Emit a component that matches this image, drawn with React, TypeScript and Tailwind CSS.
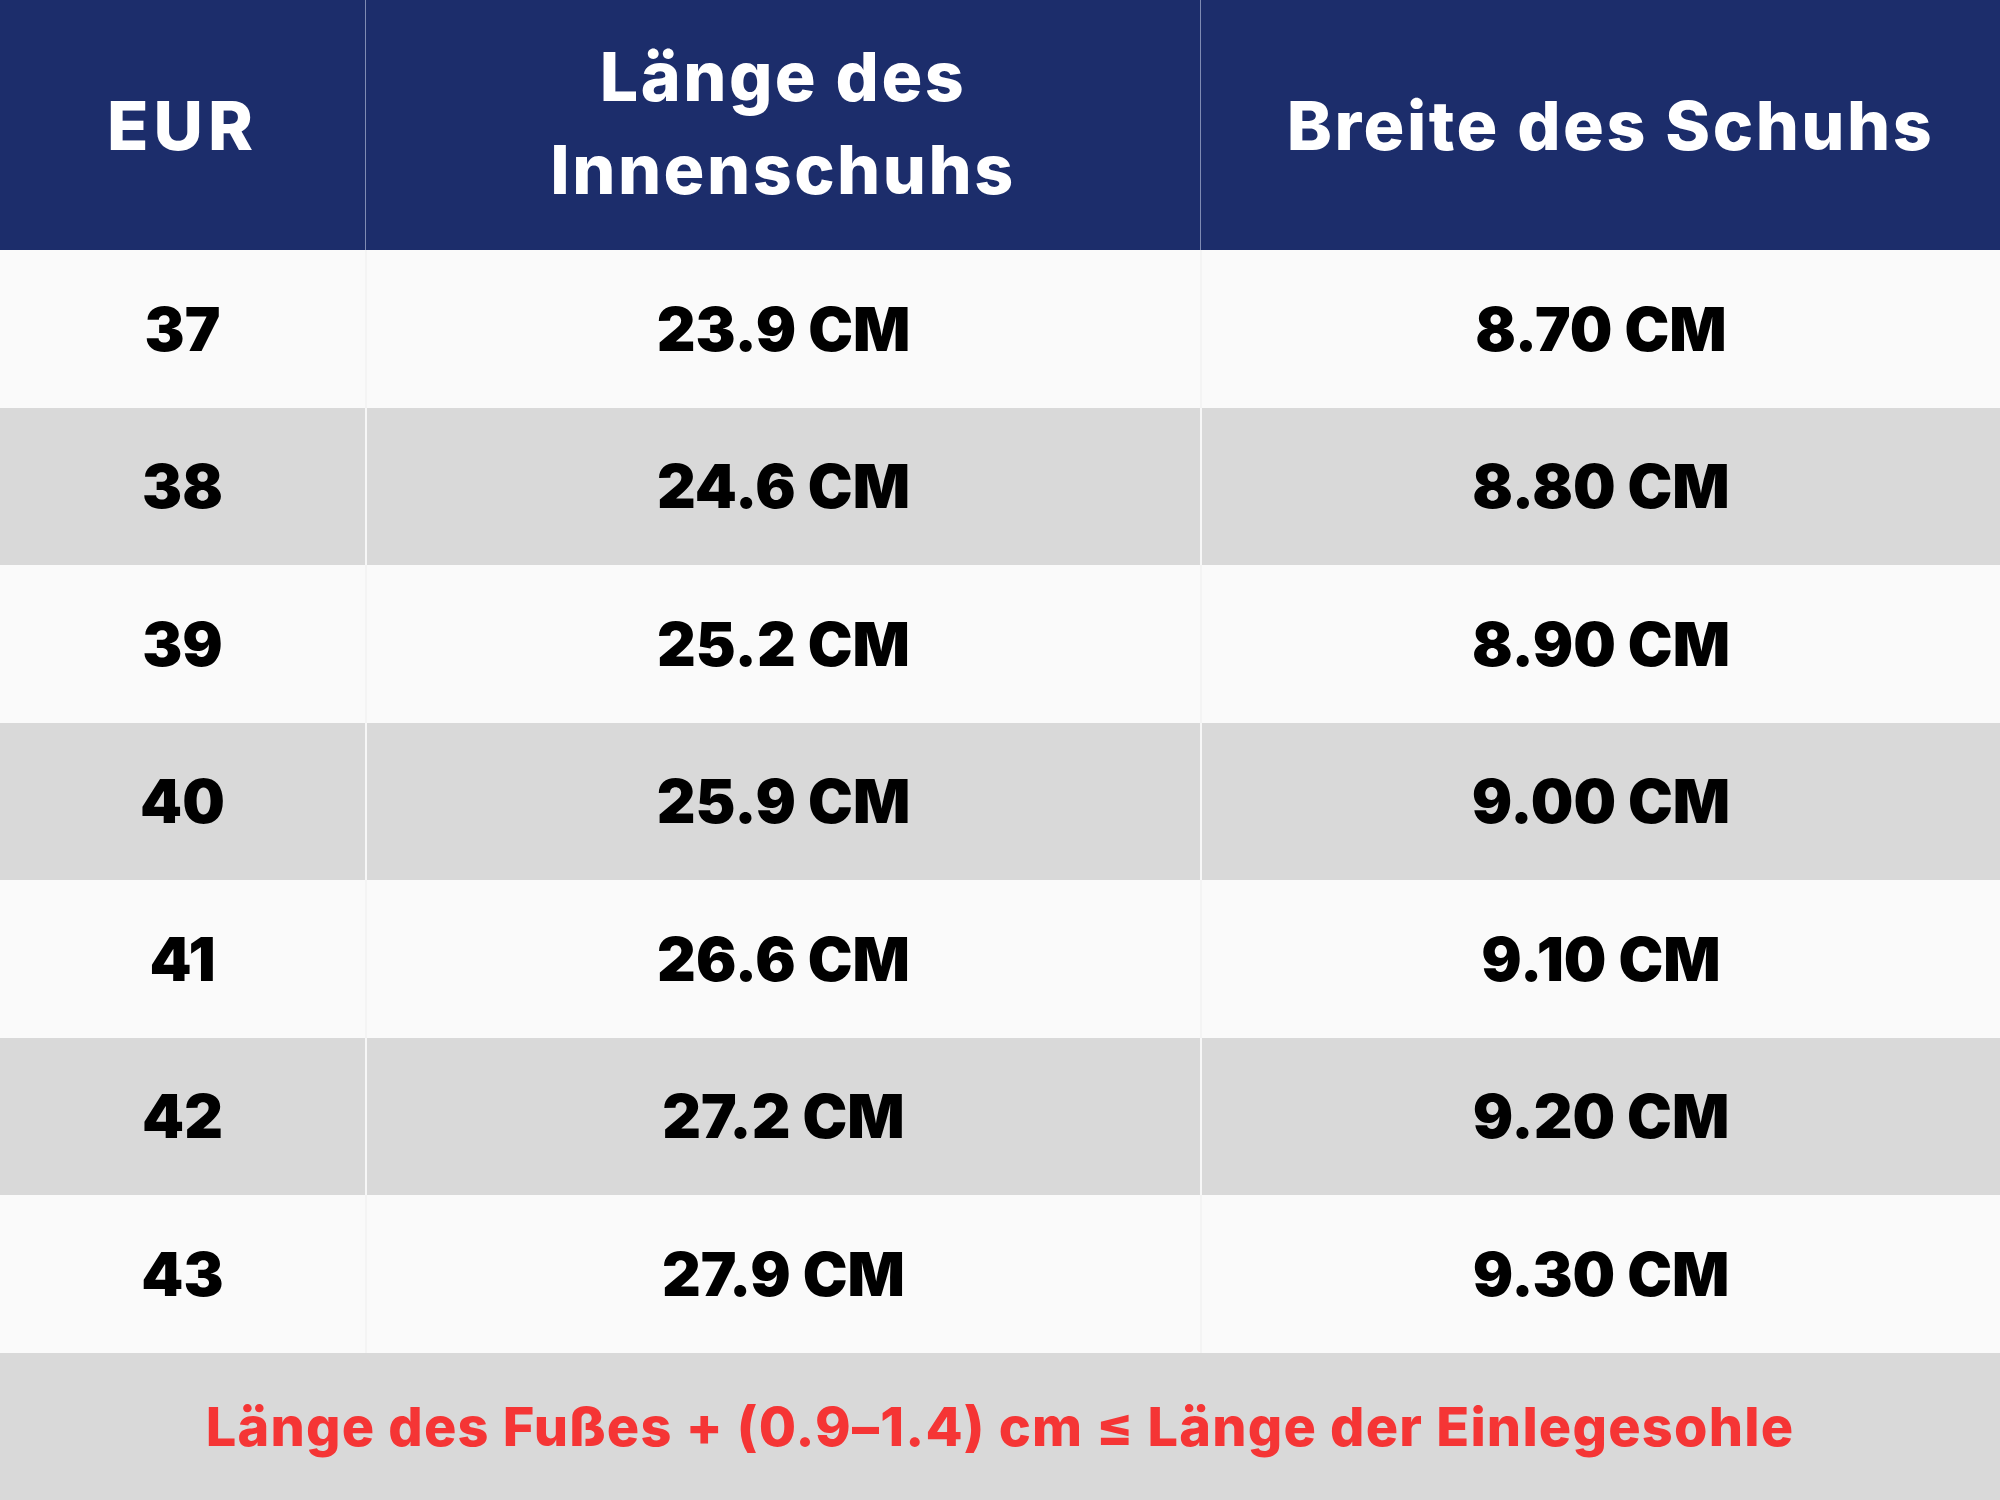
const rows = [
  ['37', '23.9 CM', '8.70 CM'],
  ['38', '24.6 CM', '8.80 CM'],
  ['39', '25.2 CM', '8.90 CM'],
  ['40', '25.9 CM', '9.00 CM'],
  ['41', '26.6 CM', '9.10 CM'],
  ['42', '27.2 CM', '9.20 CM'],
  ['43', '27.9 CM', '9.30 CM'],
];

export default function App() {
  return (
    <div
      className="w-[2000px] h-[1500px] flex flex-col bg-[#fafafa]"
      style={{ fontFamily: 'Inter, "Noto Sans", sans-serif' }}
    >
      {/* header */}
      <div className="h-[250px] grid grid-cols-[365px_1px_834px_1px_1fr] bg-[#1c2d6b] text-white font-extrabold tracking-[2.5px]">
        <div className="flex items-center justify-center text-[68px] tracking-[5px]">EUR</div>
        <div className="bg-[#7f8bb3]" />
        <div className="flex flex-col items-center justify-center text-[68px] leading-[93px] pb-[4px]">
          <span>Länge des</span>
          <span>Innenschuhs</span>
        </div>
        <div className="bg-[#7f8bb3]" />
        <div className="flex items-center justify-center text-[68px] pl-[20px]">Breite des Schuhs</div>
      </div>

      {/* body rows */}
      {rows.map(([eur, len, width], idx) => (
        <div
          key={eur}
          className={
            'h-[157.5px] grid grid-cols-[365px_2px_833px_2px_1fr] text-black font-black text-[60px] ' +
            (idx % 2 === 1 ? 'bg-[#d9d9d9]' : 'bg-[#fafafa]')
          }
        >
          <div className="flex items-center justify-center">{eur}</div>
          <div className={idx % 2 === 1 ? 'bg-[#f7f7f7]' : 'bg-[#f4f4f4]'} />
          <div className="flex items-center justify-center">{len}</div>
          <div className={idx % 2 === 1 ? 'bg-[#f7f7f7]' : 'bg-[#f4f4f4]'} />
          <div className="flex items-center justify-center">{width}</div>
        </div>
      ))}

      {/* footer note */}
      <div className="flex-1 flex items-center justify-center bg-[#d9d9d9] text-[#f53535] font-extrabold text-[54px] tracking-[1.2px]">
        Länge des Fußes + (0.9–1.4) cm ≤ Länge der Einlegesohle
      </div>
    </div>
  );
}
